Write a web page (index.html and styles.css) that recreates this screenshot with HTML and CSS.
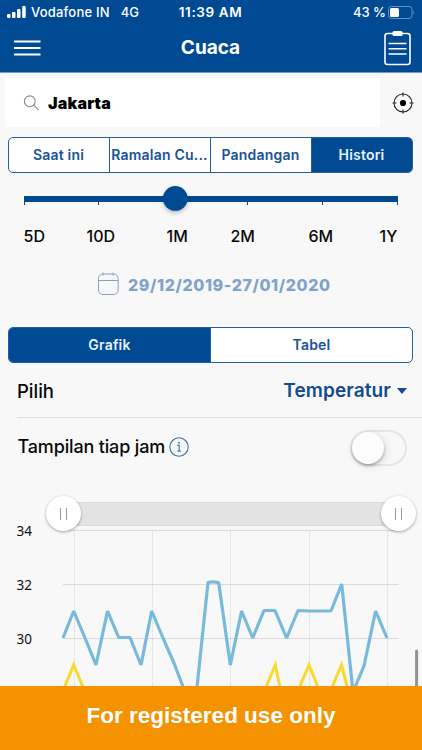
FILE: index.html
```html
<!DOCTYPE html>
<html lang="id">
<head>
    <meta charset="UTF-8">
    <title>Cuaca</title>
    <link rel="stylesheet" href="styles.css">
</head>
<body>
    <div id="container">
        <div id="header">
            <div class="status">
                <div class="carrier">
                    <svg width="20" height="12" viewBox="0 0 20 12" fill="#fff"><rect x="0" y="8" width="3.5" height="4" rx="1"/><rect x="5" y="6" width="3.5" height="6" rx="1"/><rect x="10" y="3" width="3.5" height="9" rx="1"/><rect x="15.2" y="0" width="3.5" height="12" rx="1"/></svg>
                    <span class="name">Vodafone IN</span>
                    <span>4G</span>
                </div>
                <span class="time">11:39 AM</span>
                <div class="battery">
                    <span>43 %</span>
                    <svg width="27" height="13" viewBox="0 0 27 13"><rect x=".5" y=".5" width="23.5" height="12" rx="3" fill="none" stroke="#6590c2"/><rect x="2" y="2" width="9" height="9" rx="1.5" fill="#fff"/><path d="M25.3 4.5q1.6 2 0 4z" fill="#6590c2"/></svg>
                </div>
            </div>
            <div class="nav">
                <svg width="27" height="18" viewBox="0 0 27 18" stroke="#fff" stroke-width="2"><path d="M0 2.5h26.5M0 9h26.5M0 15.5h26.5"/></svg>
                <h1>Cuaca</h1>
                <svg width="27" height="36" viewBox="0 0 27 36" fill="none" stroke="#fff"><rect x="1" y="3.5" width="25" height="31" rx="2.5" stroke-width="1.6"/><rect x="8.5" y="1" width="10" height="5" rx="1.5" fill="#fff" stroke="none"/><path d="M4.5 13.5h18M4.5 18.8h18M4.5 24h18" stroke-width="1.4"/></svg>
            </div>
        </div>
        <div class="search">
            <div class="field">
                <svg width="16" height="16" viewBox="0 0 16 16" fill="none" stroke="#888" stroke-width="1.1"><circle cx="6.8" cy="6.3" r="5.4"/><path d="M10.7 10.2l5 5"/></svg>
                <span>Jakarta</span>
            </div>
            <svg width="22" height="22" viewBox="0 0 22 22" fill="none" stroke="#222" stroke-width="1.1"><circle cx="11" cy="11" r="9"/><circle cx="11" cy="11" r="3.1" fill="#000" stroke="none"/><path d="M11 .5v4M11 17.5v4M.5 11h4M17.5 11h4"/></svg>
        </div>
        <ul class="tab modes">
            <li><span>Saat ini</span></li>
            <li><span>Ramalan Cu...</span></li>
            <li><span>Pandangan</span></li>
            <li class="selected"><span>Histori</span></li>
        </ul>
        <div class="slider">
            <svg width="374" height="28" viewBox="0 0 374 28">
                <path d="M0 12h374v6H0z" fill="#004a94"/>
                <path d="M.5 17v4M74.5 17v4M223.5 17v4M298.5 17v4M373.5 17v4" stroke="#004a94"/>
                <circle class="thumb" cx="151.3" cy="14.4" r="12.4" fill="#004a94"/>
            </svg>
            <ul class="labels">
                <li>5D</li>
                <li>10D</li>
                <li>1M</li>
                <li>2M</li>
                <li>6M</li>
                <li>1Y</li>
            </ul>
        </div>
        <div class="date">
            <svg width="22" height="24" viewBox="0 0 22 24" fill="none" stroke="#81a3cb"><rect x="1.5" y="2" width="19.7" height="20.5" rx="4.5"/><path d="M1.5 8.5h20M6 .5v3M16 .5v3"/></svg>
            <span>29/12/2019-27/01/2020</span>
        </div>
        <ul class="tab views">
            <li class="selected"><span>Grafik</span></li>
            <li><span>Tabel</span></li>
        </ul>
        <div class="row pick">
            <span class="pilih">Pilih</span>
            <div class="select"><span>Temperatur</span><i class="caret"></i></div>
        </div>
        <div class="row hourly">
            <div class="label">
                <span>Tampilan tiap jam</span>
                <svg width="20" height="20" viewBox="0 0 20 20" fill="none" stroke="#3f73ad" stroke-width="1.1"><circle cx="10" cy="10" r="9.2"/><path d="M8.3 8.4h1.9v5.4M8.3 14.1h3.6"/><circle cx="9.9" cy="5.8" r=".9" fill="#2766a8" stroke="none"/></svg>
            </div>
            <div class="switch"><i></i></div>
        </div>
        <div class="range">
            <span class="handle"></span>
            <span class="handle"></span>
        </div>
        <svg class="chart" width="422" height="160" viewBox="0 526 422 160">
            <path d="M63 530.5h336M63 584.5h336M63 638.5h336" stroke="#dadada"/>
            <path d="M74.5 531v155M152.5 531v155M230.5 531v155M309.5 531v155M387.5 531v155" stroke="#d6d6d6" stroke-dasharray="1 1"/>
            <g class="axis">
                <text x="16.5" y="535.5">34</text>
                <text x="16.5" y="589.5">32</text>
                <text x="16.5" y="643.5">30</text>
            </g>
            <g fill="none" stroke-width="3">
                <path d="M62.5 692L73.7 665L85 692M264 692L275.3 665L281 692M297.5 692L309 665L320 692M330 692L341.5 665L348.5 692" stroke="#f9d92b"/>
                <path d="M63 638L73.7 611L85 638L96 665L107.5 611L118.7 637.5L130 637.5L141 665L151.7 611L163 638L174 663L185 692L196.5 692L208 582.5Q213 581 218.7 582.7L230.3 665L241.6 611L252.7 638L264 610.5H275L286.6 638L298 610.5L309 611H331L341.7 584L353 692L364 666L375.6 611L387 638" stroke="#78badb" stroke-linejoin="bevel" stroke-width="3.2"/>
            </g>
            <path d="M416.6 651v40" stroke="#939393" stroke-width="3" stroke-linecap="round"/>
        </svg>
        <div id="footer">For registered use only</div>
    </div>
</body>
</html>
```

FILE: styles.css
```css
*{
    padding: 0;
    margin: 0;
    box-sizing: border-box;
}
ul{
    list-style: none;
}
body{
    background: #f8f8f8;
    font-family: Inter, "Liberation Sans", sans-serif;
    color: #080808;
}
svg{
    display: block;
    flex: none;
    overflow: visible;
}
span{
    white-space: nowrap;
}
#container{
    width: 422px;
    height: 750px;
    overflow: hidden;
}
#header{
    height: 73px;
    background: #004a94;
    border-bottom: 1px solid #7798c4;
    color: #fff;
}
.status{
    height: 24px;
    display: grid;
    grid-template-columns: 1fr auto 1fr;
    align-items: center;
    padding: 0 7px 0 7px;
    font-size: 13px;
    font-weight: 500;
}
.carrier, .battery{
    display: flex;
    align-items: center;
}
.carrier .name{
    margin: 0 11px 0 4px;
    letter-spacing: .2px;
}
.time{
    font-weight: 600;
    font-size: 13.5px;
    letter-spacing: .6px;
    margin-left: -1px;
}
.battery{
    justify-content: flex-end;
    gap: 2px;
}
.nav{
    height: 47px;
    display: flex;
    align-items: center;
    justify-content: space-between;
    padding: 0 11px 0 14px;
}
.nav h1{
    font-size: 19px;
    line-height: 24px;
    font-weight: 700;
    margin-right: 4px;
}
.search{
    height: 49px;
    margin: 5px 8px 0 5px;
    display: flex;
    align-items: center;
    justify-content: space-between;
}
.search .field{
    width: 375px;
    height: 49px;
    background: #fff;
    display: flex;
    align-items: center;
    padding-left: 18px;
    gap: 9px;
    font-size: 16px;
    font-weight: 900;
    letter-spacing: .2px;
    color: #000;
}
.tab{
    height: 36px;
    margin: 0 9px 0 8px;
    display: flex;
    border: 1px solid #215ea3;
    border-radius: 5px;
    overflow: hidden;
    background: #fff;
    font-size: 14px;
    font-weight: 600;
    letter-spacing: .2px;
    color: #185299;
}
.tab li{
    flex: 1 1 0;
    min-width: 0;
    display: flex;
    align-items: center;
    justify-content: center;
    border-left: 1px solid #215ea3;
}
.tab li:first-child{
    border-left: 0;
}
.tab .selected{
    background: #004a94;
    color: #e9f1fa;
}
.modes{
    margin-top: 9.5px;
}
.modes span{
    padding: 0 1px 1px 0;
}
.slider{
    margin: 11px 24px 0;
}
.thumb{
    filter: drop-shadow(0 2px 2px rgba(0,0,0,.25));
}
.labels{
    display: grid;
    grid-template-columns: 63px 80px 64px 78px 71px 18px;
    height: 20px;
    margin: 14px 0 0 -.5px;
    line-height: 20px;
    font-size: 16px;
    font-weight: 500;
}
.date{
    height: 24px;
    margin: 26.5px 0 0 97px;
    display: flex;
    align-items: center;
    gap: 9px;
    font-size: 16px;
    font-weight: 800;
    letter-spacing: .6px;
    color: #81a3cb;
}
.date span{
    padding-top: 2px;
}
.views{
    margin-top: 30.5px;
}
.row{
    display: flex;
    align-items: center;
    justify-content: space-between;
}
.pick{
    height: 55px;
    margin-left: 17px;
    padding: 2px 15px 0 0;
    border-bottom: 1px solid #dedfe3;
    font-size: 18.5px;
    font-weight: 500;
}
.select{
    display: flex;
    align-items: center;
    gap: 6px;
    font-weight: 600;
    font-size: 19px;
    letter-spacing: .1px;
    color: #134b8e;
}
.caret{
    border: 5.5px solid transparent;
    border-top: 6px solid #134b8e;
    border-bottom: 0;
}
.hourly{
    height: 60px;
    padding: 0 15px 0 17.5px;
    font-size: 18px;
    font-weight: 500;
    letter-spacing: -.16px;
}
.hourly .label{
    display: flex;
    align-items: center;
    gap: 4px;
    padding-bottom: 2px;
}
.switch{
    width: 57px;
    height: 36px;
    border: 2px solid #e6e6e6;
    border-radius: 18px;
}
.switch i{
    display: block;
    width: 32px;
    height: 32px;
    border-radius: 50%;
    background: #fcfcfc;
    box-shadow: 0 2px 3px rgba(0,0,0,.25), 2px 2px 8px rgba(0,0,0,.12);
}
.range{
    height: 24px;
    margin: 24px 23.5px 0 63px;
    background: #e3e3e3;
    border: 1px solid #dadada;
    border-width: 1px 0;
    display: flex;
    align-items: center;
    justify-content: space-between;
}
.handle{
    flex: none;
    width: 35px;
    height: 35px;
    margin: 0 -17.5px;
    border-radius: 50%;
    background: #fff;
    box-shadow: 0 1px 3px rgba(0,0,0,.35);
    display: flex;
    align-items: center;
    justify-content: center;
    z-index: 1;
}
.handle::before{
    content: "";
    width: 5px;
    height: 12px;
    border: 1px solid #999;
    border-width: 0 1px;
}
.chart{
    margin-top: .5px;
}
.axis{
    font-family: "Noto Sans", sans-serif;
    font-size: 13.5px;
    fill: #111;
}
#footer{
    position: relative;
    height: 66px;
    background: #f49200;
    color: #fff;
    font: bold 22.5px/60px "Liberation Sans", sans-serif;
    text-align: center;
}
```
